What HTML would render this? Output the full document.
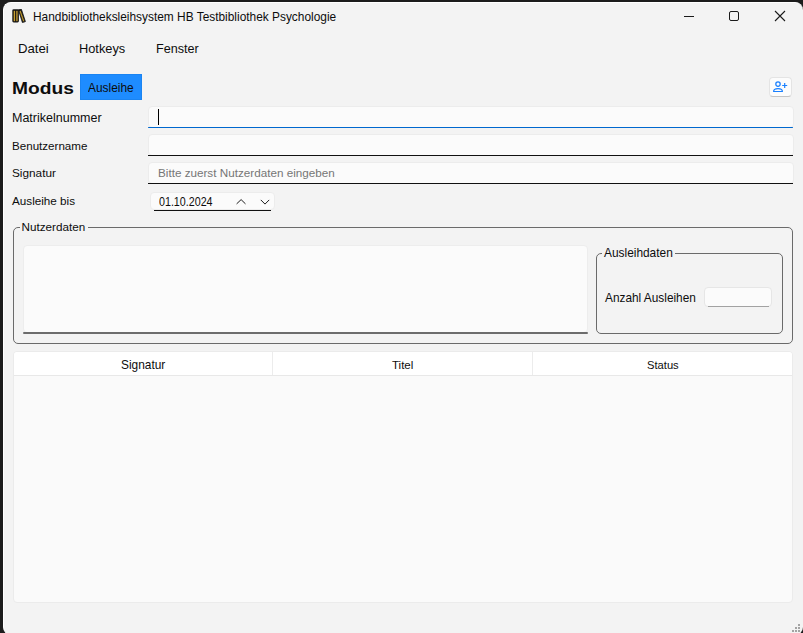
<!DOCTYPE html>
<html><head><meta charset="utf-8">
<style>
*{margin:0;padding:0;box-sizing:border-box}
html,body{width:803px;height:633px;overflow:hidden;background:#1c1c1c;font-family:"Liberation Sans",sans-serif;color:#0d0d0d}
.win{position:absolute;left:3px;top:2px;width:800px;height:633px;background:#f3f3f3;border-radius:8px;border-top:1px solid #fff;border-left:1px solid #fff}
.t{position:absolute;white-space:nowrap;line-height:12px;font-size:12px}
.field{position:absolute;background:#fbfbfb;border:1px solid #ececec;border-radius:4px}
.uline{position:absolute;height:1.3px;background:#111}
.gb{position:absolute;border:1px solid #6a6a6a;border-radius:5px}
</style></head><body>
<div class="win"></div>

<!-- title bar -->
<svg style="position:absolute;left:12px;top:9px" width="14" height="14" viewBox="0 0 14 14">
  <rect x="0.3" y="0.3" width="6.6" height="13.2" rx="1.4" fill="#141414"/>
  <path d="M6.4 0.8 L9.4 0.3 L13.4 12.6 L10.4 13.6 Z" fill="#141414" stroke="#141414" stroke-width="0.8" stroke-linejoin="round"/>
  <rect x="1.7" y="1.8" width="1.4" height="10.4" fill="#c9a030"/>
  <rect x="4" y="1.8" width="1.8" height="10.4" fill="#9a7b2c"/>
  <path d="M7.5 2 L8.7 1.7 L12.3 12.1 L11.1 12.4 Z" fill="#b8942e"/>
</svg>
<div class="t" style="left:33px;top:10.7px;font-size:11.9px">Handbibliotheksleihsystem HB Testbibliothek Psychologie</div>

<div style="position:absolute;left:684px;top:16px;width:10px;height:1px;background:#1a1a1a"></div>
<div style="position:absolute;left:729px;top:11px;width:10px;height:10px;border:1px solid #1a1a1a;border-radius:2px"></div>
<svg style="position:absolute;left:774px;top:10px" width="12" height="12" viewBox="0 0 12 12">
  <path d="M1 1 L11 11 M11 1 L1 11" stroke="#1a1a1a" stroke-width="1.1"/>
</svg>

<!-- menu -->
<div class="t" style="left:18px;top:42.8px;font-size:13.2px">Datei</div>
<div class="t" style="left:79px;top:42.8px;font-size:12.8px">Hotkeys</div>
<div class="t" style="left:156px;top:42.8px;font-size:12.6px">Fenster</div>

<!-- Modus row -->
<div class="t" style="left:12px;top:77.9px;font-size:19.2px;line-height:19.2px;font-weight:bold;transform-origin:0 16.25px;transform:scaleY(0.88)">Modus</div>
<div style="position:absolute;left:80px;top:74px;width:62px;height:26px;background:#1e8cff;border:1px solid #1a84f2"></div>
<div class="t" style="left:88px;top:82.2px;font-size:12.4px;line-height:12.4px;transform-origin:0 0;transform:scaleX(0.96)">Ausleihe</div>

<div style="position:absolute;left:768.5px;top:77px;width:23px;height:20px;background:#fcfcfc;border:1px solid #e4e4e4;border-bottom-color:#c4c4c4;border-radius:4px"></div>
<svg style="position:absolute;left:764px;top:72px" width="32" height="30" viewBox="0 0 32 30">
  <circle cx="14" cy="12.1" r="2.2" fill="none" stroke="#1a80ff" stroke-width="1.25"/>
  <path d="M9.6 19.5 C9.6 17.2 11.5 16.6 14 16.6 C16.5 16.6 18.4 17.2 18.4 19.5 Z" fill="none" stroke="#1a80ff" stroke-width="1.2" stroke-linejoin="round"/>
  <path d="M18.2 13.5 H23.2 M20.7 11.1 V15.9" stroke="#1a80ff" stroke-width="1.2"/>
</svg>

<!-- labels -->
<div class="t" style="left:12px;top:112px;font-size:12.5px">Matrikelnummer</div>
<div class="t" style="left:12px;top:139.8px;font-size:11.6px">Benutzername</div>
<div class="t" style="left:12px;top:166.6px;font-size:11.8px">Signatur</div>
<div class="t" style="left:12px;top:194.6px;font-size:11.7px">Ausleihe bis</div>

<!-- fields -->
<div class="field" style="left:148px;top:106px;width:646px;height:22px"></div>
<div style="position:absolute;left:148px;top:127px;width:645px;height:1px;background:#0068cf;border-radius:1px"></div>
<div style="position:absolute;left:158px;top:109px;width:1px;height:16px;background:#000"></div>

<div class="field" style="left:148px;top:134px;width:646px;height:22px"></div>
<div class="uline" style="left:148px;top:155px;width:645px"></div>

<div class="field" style="left:148px;top:162px;width:646px;height:22px"></div>
<div class="uline" style="left:148px;top:183px;width:645px"></div>
<div class="t" style="left:158px;top:167.3px;font-size:11.7px;color:#767676">Bitte zuerst Nutzerdaten eingeben</div>

<!-- date -->
<div class="field" style="left:150px;top:192px;width:125px;height:18px"></div>
<div class="uline" style="left:154px;top:210px;width:117px"></div>
<div class="t" style="left:159px;top:195.5px;font-size:12.3px;line-height:12.3px;transform-origin:0 0;transform:scaleX(0.87)">01.10.2024</div>
<svg style="position:absolute;left:230px;top:195px" width="45" height="12" viewBox="0 0 45 12">
  <path d="M6.6 8.9 L11.1 4.6 L15.5 8.9" fill="none" stroke="#1c1c1c" stroke-width="1"/>
  <path d="M30.8 4.9 L35 9.1 L39.2 4.9" fill="none" stroke="#1c1c1c" stroke-width="1"/>
</svg>

<!-- Nutzerdaten group -->
<div class="gb" style="left:13px;top:227px;width:780px;height:117px"></div>
<div style="position:absolute;left:20px;top:222px;width:68px;height:10px;background:#f3f3f3"></div>
<div class="t" style="left:21.5px;top:220.6px;font-size:11.7px">Nutzerdaten</div>

<div class="field" style="left:23px;top:245px;width:565px;height:88px;border-color:#ededed"></div>
<div style="position:absolute;left:22.5px;top:332px;width:565.5px;height:2px;background:#6c6c6c;border-radius:1px"></div>

<div class="gb" style="left:596px;top:253px;width:187px;height:81px"></div>
<div style="position:absolute;left:602px;top:247px;width:73px;height:10px;background:#f3f3f3"></div>
<div class="t" style="left:604px;top:246.9px;font-size:11.9px">Ausleihdaten</div>
<div class="t" style="left:605px;top:292.2px;font-size:11.85px">Anzahl Ausleihen</div>
<div class="field" style="left:704px;top:287px;width:68px;height:20px;border-color:#e6e6e6"></div>
<div style="position:absolute;left:708px;top:306px;width:61px;height:1px;background:#a2a2a2"></div>

<!-- table -->
<div style="position:absolute;left:13px;top:351px;width:780px;height:252px;background:#fafafa;border:1px solid #ebebeb;border-radius:4px;overflow:hidden">
  <div style="position:absolute;left:0;top:0;width:780px;height:24px;background:#fff;border-bottom:1px solid #e8e8e8"></div>
  <div style="position:absolute;left:258px;top:0;width:1px;height:23px;background:#ececec"></div>
  <div style="position:absolute;left:518px;top:0;width:1px;height:23px;background:#ececec"></div>
</div>
<div class="t" style="left:121px;top:359px;font-size:11.9px">Signatur</div>
<div class="t" style="left:392px;top:359px;font-size:11.5px">Titel</div>
<div class="t" style="left:647px;top:359px;font-size:11.2px">Status</div>

<!-- size grip -->
<svg style="position:absolute;left:792px;top:624px" width="10" height="10" viewBox="0 0 10 10" fill="#a3a3a3">
  <rect x="6" y="0" width="2" height="2"/>
  <rect x="3" y="3" width="2" height="2"/><rect x="6" y="3" width="2" height="2"/>
  <rect x="0" y="6" width="2" height="2"/><rect x="3" y="6" width="2" height="2"/><rect x="6" y="6" width="2" height="2"/>
</svg>
</body></html>
